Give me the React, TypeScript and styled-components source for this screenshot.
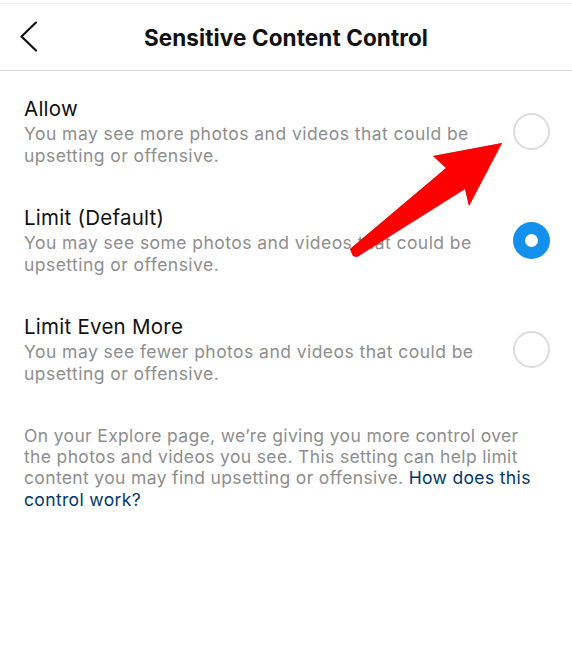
import styled, { createGlobalStyle } from "styled-components"
import { useState } from "react"

const GlobalStyle = createGlobalStyle`
  * {
    box-sizing: border-box;
  }
  body {
    margin: 0;
    background: #ffffff;
    font-family: Inter, "Noto Sans", "Liberation Sans", sans-serif;
    -webkit-font-smoothing: antialiased;
  }
`

const Page = styled.div`
  position: relative;
  width: 572px;
  min-height: 646px;
  padding-top: 3px;
  background: #ffffff;
`

const Header = styled.header`
  display: grid;
  grid-template-columns: 60px 1fr 60px;
  align-items: center;
  height: 68px;
  border-top: 1px solid #ececec;
  border-bottom: 1px solid #dbdbdb;
`

const BackButton = styled.button`
  display: flex;
  align-items: center;
  justify-content: flex-start;
  padding: 0 0 0 19px;
  border: none;
  background: none;
  cursor: pointer;
`

const Title = styled.h1`
  margin: 0;
  text-align: center;
  font-size: 22.5px;
  font-weight: 700;
  color: #111111;
  letter-spacing: 0.1px;
  white-space: nowrap;
`

const Options = styled.div`
  display: flex;
  flex-direction: column;
  gap: 40px;
  padding: 26px 22px 0 24px;
`

const OptionRow = styled.label`
  display: flex;
  align-items: center;
  justify-content: space-between;
  gap: 24px;
  cursor: pointer;
`

const OptionText = styled.div`
  display: flex;
  flex-direction: column;
`

const OptionTitle = styled.div`
  font-size: 20.5px;
  line-height: 24px;
  letter-spacing: 0.25px;
  color: #111111;
`

const OptionDesc = styled.div`
  margin-top: 2px;
  font-size: 17.5px;
  line-height: 21.5px;
  letter-spacing: 0.45px;
  color: #8e8e8e;
`

const Radio = styled.span<{ $checked: boolean }>`
  flex: none;
  display: flex;
  align-items: center;
  justify-content: center;
  width: 37px;
  height: 37px;
  border-radius: 50%;
  border: ${({ $checked }) => ($checked ? "none" : "2px solid #dcdcdc")};
  background: ${({ $checked }) => ($checked ? "#1390ec" : "#ffffff")};

  &::after {
    content: "";
    display: ${({ $checked }) => ($checked ? "block" : "none")};
    width: 13px;
    height: 13px;
    border-radius: 50%;
    background: #ffffff;
  }
`

const Footer = styled.p`
  margin: 41px 28px 0 24px;
  font-size: 17.5px;
  line-height: 21.2px;
  letter-spacing: 0.35px;
  color: #8e8e8e;
`

const Link = styled.a`
  color: #00376b;
  text-decoration: none;
`

const Arrow = styled.svg`
  position: absolute;
  left: 0;
  top: 0;
  pointer-events: none;
  filter: drop-shadow(0 0 0.6px rgba(150, 0, 0, 0.6));
`

const options = [
  {
    id: "allow",
    title: "Allow",
    desc: "You may see more photos and videos that could be upsetting or offensive.",
  },
  {
    id: "limit",
    title: "Limit (Default)",
    desc: "You may see some photos and videos that could be upsetting or offensive.",
  },
  {
    id: "more",
    title: "Limit Even More",
    desc: "You may see fewer photos and videos that could be upsetting or offensive.",
  },
]

function App() {
  const [selected, setSelected] = useState("limit")

  return (
    <>
      <GlobalStyle />
      <Page>
        <Header>
          <BackButton type="button" aria-label="Back">
            <svg width="20" height="32" viewBox="0 0 20 32">
              <polyline
                points="17,1.5 2.5,15.5 17,29.5"
                fill="none"
                stroke="#111"
                strokeWidth="2.2"
                strokeLinecap="round"
                strokeLinejoin="round"
              />
            </svg>
          </BackButton>
          <Title>Sensitive Content Control</Title>
          <span />
        </Header>

        <Options>
          {options.map((opt) => (
            <OptionRow key={opt.id} onClick={() => setSelected(opt.id)}>
              <OptionText>
                <OptionTitle>{opt.title}</OptionTitle>
                <OptionDesc>{opt.desc}</OptionDesc>
              </OptionText>
              <Radio $checked={selected === opt.id} />
            </OptionRow>
          ))}
        </Options>

        <Footer>
          On your Explore page, we’re giving you more control over the photos
          and videos you see. This setting can help limit content you may find
          upsetting or offensive. <Link href="#">How does this control work?</Link>
        </Footer>

        <Arrow width="572" height="646" viewBox="0 0 572 646">
          <polygon
            points="502,143 433,156 446,168 350,249 353,256 357,257 465,189 469,206"
            fill="#ff0000"
            strokeLinejoin="round"
          />
        </Arrow>
      </Page>
    </>
  )
}

export default App
